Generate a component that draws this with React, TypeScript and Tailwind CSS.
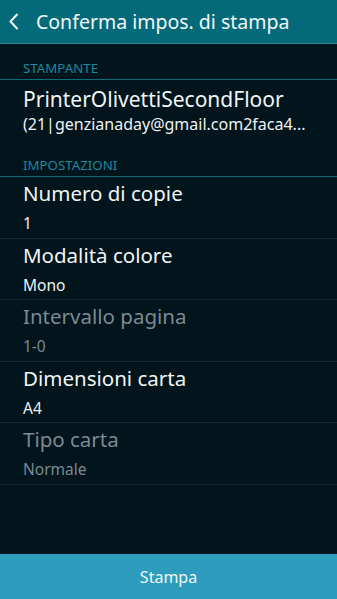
import React from 'react';

type Setting = { label: string; value: string; disabled?: boolean };

const settings: Setting[] = [
  { label: 'Numero di copie', value: '1' },
  { label: 'Modalità colore', value: 'Mono' },
  { label: 'Intervallo pagina', value: '1-0', disabled: true },
  { label: 'Dimensioni carta', value: 'A4' },
  { label: 'Tipo carta', value: 'Normale', disabled: true },
];

function SectionHeader({ title }: { title: string }) {
  return (
    <div className="h-[36px] flex items-end pb-[4px] px-[23px] border-b border-[#0f6b78]">
      <span className="text-[13.3px] leading-none text-[#1a8a9b]">{title}</span>
    </div>
  );
}

function SettingRow({ label, value, disabled }: Setting) {
  return (
    <div className="h-[61.5px] flex flex-col px-[23px] border-b border-[#15262d]">
      <div className={`mt-[3px] text-[20.5px] leading-[26px] ${disabled ? 'text-[#7a8b92]' : 'text-[#f1f4f5]'}`}>
        {label}
      </div>
      <div className={`mt-[6px] text-[15.5px] leading-[22px] ${disabled ? 'text-[#7a8b92]' : 'text-[#eef2f3]'}`}>
        {value}
      </div>
    </div>
  );
}

export default function App() {
  return (
    <div
      className="w-[337px] h-[599px] bg-[#02141c] flex flex-col overflow-hidden"
      style={{ fontFamily: '"Noto Sans", Roboto, sans-serif' }}
    >
      <div className="h-[44px] shrink-0 bg-[#046a79] border-b border-[#2c8793] flex items-center">
        <svg width="36" height="43" viewBox="0 0 36 43" className="shrink-0">
          <path d="M17 14.5 L10.5 21.5 L17 28.5" fill="none" stroke="#f2f6f7" strokeWidth="2" strokeLinecap="round" strokeLinejoin="round" />
        </svg>
        <span className="text-[19.5px] text-[#f2f6f7] leading-none">Conferma impos. di stampa</span>
      </div>

      <SectionHeader title="STAMPANTE" />
      <div className="h-[61px] flex flex-col px-[23px]">
        <div className="mt-[6px] text-[21px] leading-[26px] text-[#f1f4f5] whitespace-nowrap">PrinterOlivettiSecondFloor</div>
        <div className="mt-[1px] text-[16px] leading-[22px] text-[#eef2f3] whitespace-nowrap">(21|genzianaday@gmail.com2faca4...</div>
      </div>

      <SectionHeader title="IMPOSTAZIONI" />
      {settings.map((s) => (
        <SettingRow key={s.label} {...s} />
      ))}

      <div className="flex-1" />
      <button className="h-[45px] shrink-0 w-full bg-[#2d9cbd] text-[#f2f8fa] text-[16px]">Stampa</button>
    </div>
  );
}
